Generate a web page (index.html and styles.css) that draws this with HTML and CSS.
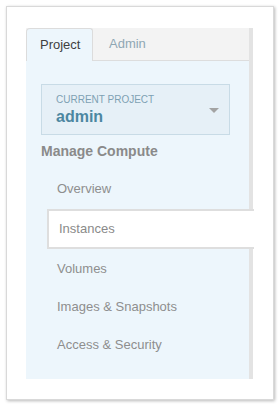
FILE: index.html
```html
<!DOCTYPE html>
<html>
<head>
<meta charset="utf-8">
<link rel="stylesheet" href="styles.css">
</head>
<body>
<div class="card">
  <div class="panel">
    <div class="tabs">
      <div class="tab active">Project</div>
      <div class="tab">Admin</div>
    </div>
    <div class="body">
      <div class="project-box">
        <div class="project-text">
          <div class="label">CURRENT PROJECT</div>
          <div class="name">admin</div>
        </div>
        <span class="caret"></span>
      </div>
      <h4 class="heading">Manage Compute</h4>
      <ul class="nav">
        <li class="item">Overview</li>
        <li class="item selected">Instances</li>
        <li class="item">Volumes</li>
        <li class="item">Images &amp; Snapshots</li>
        <li class="item">Access &amp; Security</li>
      </ul>
    </div>
  </div>
</div>
</body>
</html>
```
FILE: styles.css
```css
* { box-sizing: border-box; }
html, body { margin: 0; padding: 0; background: #fff; }
body { font-family: "Liberation Sans", Arial, sans-serif; }

.card {
  margin: 6px;
  width: 268px;
  height: 394px;
  border: 1px solid #d9d9d9;
  box-shadow: 1px 1px 3px rgba(0,0,0,0.28);
  padding: 21px 0 0 19px;
  background: #fff;
}

.panel {
  width: 227px;
  height: 351px;
  background: #edf6fc;
  border-right: 4px solid #e3e3e3;
}

.tabs {
  display: flex;
  height: 33px;
  background: #f3f3f3;
  border-bottom: 1px solid #dddddd;
}
.tab {
  font-size: 13px;
  line-height: 32px;
  color: #8fa7b4;
  padding: 0 16px;
}
.tab.active {
  color: #3f3f3f;
  background: #edf6fc;
  border: 1px solid #dcdcdc;
  border-bottom: none;
  border-radius: 4px 3px 0 0;
  padding: 0 12px 0 13px;
  height: 33px;
  margin-bottom: -1px;
  width: 67px;
}

.body { padding: 23px 0 0 15px; }

.project-box {
  display: flex;
  align-items: center;
  width: 189px;
  height: 51px;
  border: 1px solid #c8dbe6;
  background: #e6f0f7;
  padding: 0 10px 0 14px;
}
.project-text { flex: 1; }
.label {
  font-size: 10px;
  line-height: 12px;
  color: #7ea1b3;
  margin-bottom: 2px;
}
.name {
  font-size: 16px;
  font-weight: bold;
  line-height: 18px;
  color: #4c87a1;
}
.caret {
  width: 0;
  height: 0;
  border-left: 5px solid transparent;
  border-right: 5px solid transparent;
  border-top: 5px solid #a3a3a3;
  margin-top: 2px;
}

.heading {
  margin: 6px 0 9px 0;
  font-size: 14px;
  line-height: 20px;
  font-weight: bold;
  color: #8a8a8a;
}

.nav { list-style: none; margin: 0; padding: 0; }
.item {
  height: 38px;
  line-height: 38px;
  font-size: 13px;
  color: #8e8e8e;
  padding-left: 16px;
}
.item.selected {
  height: 40px;
  line-height: 36px;
  margin: 1px -5px 1px 6px;
  padding-left: 10px;
  background: #fff;
  border: 2px solid #dedede;
  border-right: none;
  color: #8a8a8a;
}
```
